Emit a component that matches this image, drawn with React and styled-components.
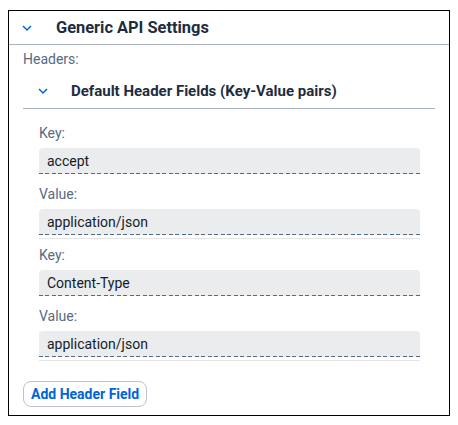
import styled, { createGlobalStyle } from 'styled-components'

const GlobalStyle = createGlobalStyle`
    body {
        margin: 0;
        background: #ffffff;
        font-family: Roboto, "Liberation Sans", sans-serif;
    }
`;

const Panel = styled.section`
    margin: 10px 0 0 8px;
    width: 442px;
    box-sizing: border-box;
    border: 1px solid #000000;
    background: #ffffff;
`;

const PanelHeader = styled.div`
    height: 33px;
    display: flex;
    align-items: center;
    padding-left: 13px;
    border-bottom: 1px solid #a9b4be;
`;

const SubHeader = styled.div`
    height: 34px;
    margin-top: 6px;
    display: flex;
    align-items: center;
    padding-left: 15px;
    border-bottom: 1px solid #a9b4be;
`;

const Chevron = styled.svg`
    flex: none;
    width: ${p => p.$size}px;
    height: ${p => p.$size}px;
    margin-right: ${p => p.$gap}px;
`;

const Title = styled.h2`
    margin: 0;
    font-size: ${p => p.$small ? '15px' : '16.4px'};
    font-weight: 700;
    color: #1d2d3e;
    line-height: 18px;
`;

const PanelBody = styled.div`
    padding: 5px 14px 8px 14px;
`;

const Label = styled.div`
    font-size: 14px;
    line-height: 18px;
    color: #556b82;
`;

const Fields = styled.div`
    padding: 15px 15px 0 16px;
    display: flex;
    flex-direction: column;
    gap: 7px;
`;

const Pair = styled.div`
    display: flex;
    flex-direction: column;
    gap: 11px;
    padding-bottom: 3px;
    border-bottom: 1px solid #e5e5e5;
`;

const Field = styled.div`
    display: flex;
    flex-direction: column;
    gap: 6px;
`;

const Input = styled.div`
    height: 26px;
    box-sizing: border-box;
    display: flex;
    align-items: center;
    padding: 0 8px 1px 8px;
    background-color: #eaecee;
    background-image: repeating-linear-gradient(to right, #556b82 0 4px, transparent 4px 6.5px);
    background-size: 100% 1px;
    background-position: left bottom;
    background-repeat: no-repeat;
    border-radius: 4px 4px 0 0;
    font-size: 14px;
    color: #131e29;
`;

const AddButton = styled.button`
    margin-top: 20px;
    height: 26px;
    padding: 0 7px;
    background: #ffffff;
    border: 1px solid #bcc3ca;
    border-radius: 8px;
    font-family: inherit;
    font-size: 14px;
    font-weight: 700;
    color: #0064d9;
    cursor: pointer;
`;

function ChevronDown({ size, gap }) {
    return (
        <Chevron $size={size} $gap={gap} viewBox="0 0 10 10">
            <polyline points="1,3 5,7 9,3" fill="none" stroke="#0064d9" strokeWidth="1.5" />
        </Chevron>
    )
}

const headers = [
    { key: 'accept', value: 'application/json' },
    { key: 'Content-Type', value: 'application/json' },
];

function App() {
    return (
        <>
            <GlobalStyle />
            <Panel>
                <PanelHeader>
                    <ChevronDown size={10} gap={24} />
                    <Title>Generic API Settings</Title>
                </PanelHeader>
                <PanelBody>
                    <Label>Headers:</Label>
                    <SubHeader>
                        <ChevronDown size={10} gap={23} />
                        <Title $small>Default Header Fields (Key-Value pairs)</Title>
                    </SubHeader>
                    <Fields>
                        {headers.map(h => (
                            <Pair key={h.key}>
                                <Field>
                                    <Label>Key:</Label>
                                    <Input>{h.key}</Input>
                                </Field>
                                <Field>
                                    <Label>Value:</Label>
                                    <Input>{h.value}</Input>
                                </Field>
                            </Pair>
                        ))}
                    </Fields>
                    <AddButton>Add Header Field</AddButton>
                </PanelBody>
            </Panel>
        </>
    )
}

export default App
